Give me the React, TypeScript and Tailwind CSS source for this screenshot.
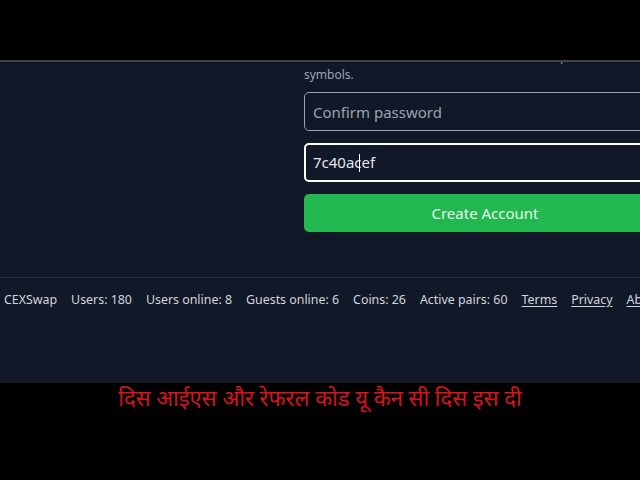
export default function App() {
  const stats = [
    "CEXSwap",
    "Users: 180",
    "Users online: 8",
    "Guests online: 6",
    "Coins: 26",
    "Active pairs: 60",
  ];
  const links = ["Terms", "Privacy", "About"];

  return (
    <div
      className="w-[640px] h-[480px] bg-black flex flex-col overflow-hidden"
      style={{ fontFamily: '"Noto Sans", "Open Sans", sans-serif' }}
    >
      {/* top black band */}
      <div className="h-[60px] shrink-0 bg-black" />
      <div className="h-[2px] shrink-0 bg-[#3f4247]" />

      {/* page */}
      <div className="h-[321px] shrink-0 bg-[#111827] flex flex-col">
        <div className="h-[215px] shrink-0 overflow-hidden flex flex-col justify-end pb-[45px]">
          <div className="flex">
            <div className="w-[304px] shrink-0" />
            <div className="w-[362px] shrink-0 flex flex-col">
              <p className="text-[12px] leading-[17px] text-[#9ca3af] mb-[9px]">
                Use 8 or more characters with a mix of letters, numbers &amp;
                <br />
                symbols.
              </p>
              <input
                readOnly
                placeholder="Confirm password"
                className="h-[39px] rounded-[5px] border border-[#9ca3af] bg-[#111827] px-[8px] text-[15px] text-gray-200 placeholder:text-[#9ca3af] outline-none"
              />
              <div className="mt-[12px] h-[39px] rounded-[5px] border-2 border-white bg-[#111827] px-[7px] flex items-center text-[15px] text-[#e5e7eb]">
                <span>7c40ac</span>
                <span className="w-px h-[18px] bg-white -ml-[3px] mr-[2px]" />
                <span>ef</span>
              </div>
              <button className="mt-[12px] h-[38px] rounded-[5px] bg-[#22b850] text-[15px] text-[#e8f8ec]">
                Create Account
              </button>
            </div>
          </div>
        </div>

        {/* footer */}
        <footer className="flex-1 border-t border-[#2a3140] pt-[13px] pl-[4px]">
          <div className="flex gap-[14px] whitespace-nowrap text-[12.4px] leading-[18px] text-[#d1d5db]">
            {stats.map((s) => (
              <span key={s}>{s}</span>
            ))}
            {links.map((l) => (
              <a key={l} className="underline underline-offset-2">
                {l}
              </a>
            ))}
          </div>
        </footer>
      </div>

      {/* subtitle */}
      <div className="flex-1 bg-black flex justify-center pt-[4px]">
        <p
          className="text-[22px] leading-[28px] text-[#d8151b]"
          style={{ fontFamily: '"Noto Sans Devanagari", "Lohit Devanagari", "Noto Sans", sans-serif' }}
        >
          दिस आईएस और रेफरल कोड यू कैन सी दिस इस दी
        </p>
      </div>
    </div>
  );
}
